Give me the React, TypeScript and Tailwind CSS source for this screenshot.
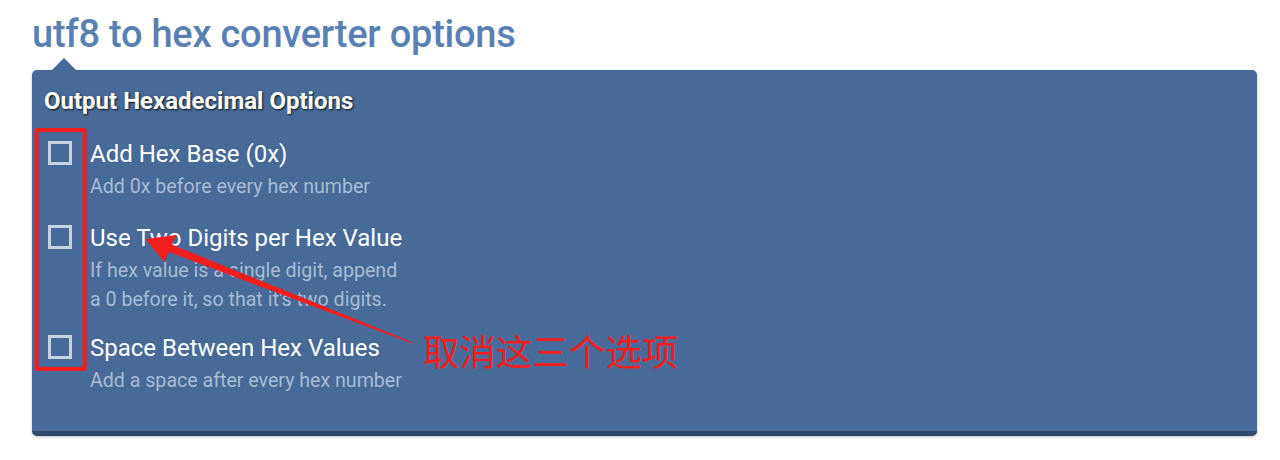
import React from "react";

const items = [
  { label: "Add Hex Base (0x)", desc: ["Add 0x before every hex number"], gap: "" },
  {
    label: "Use Two Digits per Hex Value",
    desc: ["If hex value is a single digit, append", "a 0 before it, so that it's two digits."],
    gap: "mt-[23px]",
  },
  { label: "Space Between Hex Values", desc: ["Add a space after every hex number"], gap: "mt-[20px]" },
];

export default function App() {
  return (
    <div className="w-[1280px] h-[460px] bg-white relative overflow-hidden" style={{ fontFamily: "Roboto, 'Noto Sans', sans-serif" }}>
      <div className="pl-[32px] pr-[23px]">
        <h1 className="pt-[14px] mb-[16px] text-[38px] leading-[40px] font-medium text-[#5a7fb3] tracking-[-0.25px]">
          utf8 to hex converter options
        </h1>
        <div className="relative bg-[#476a98] rounded-[5px] border-b-[5px] border-[#2f4a6c] shadow-[0_1px_3px_rgba(0,0,0,0.25)] pl-[12px] pt-[17px] pb-[36px]">
          <div className="absolute left-[20px] top-[-12px] w-0 h-0 border-l-[12px] border-r-[12px] border-b-[12px] border-l-transparent border-r-transparent border-b-[#476a98]" />
          <div className="text-[24px] leading-[28px] font-bold text-white [text-shadow:1px_1px_2px_#111]">
            Output Hexadecimal Options
          </div>
          <div className="mt-[25px] flex flex-col">
            {items.map((it) => (
              <div key={it.label} className={`flex items-start ${it.gap}`}>
                <div className="ml-[4px] mt-[1px] w-[24px] h-[24px] border-[3px] border-[#c9d2df] shrink-0" />
                <div className="ml-[18px]">
                  <div className="text-[24px] leading-[28px] text-white">{it.label}</div>
                  <div className="mt-[4px] text-[19.6px] leading-[29px] text-[#a9bad3]">
                    {it.desc.map((d) => (
                      <div key={d}>{d}</div>
                    ))}
                  </div>
                </div>
              </div>
            ))}
          </div>
        </div>
      </div>

      <div className="absolute left-[35px] top-[128px] w-[52px] h-[243px] border-[4px] border-[#f21d1d] rounded-[3px]" />

      <svg className="absolute left-0 top-0" width="1280" height="460" viewBox="0 0 1280 460">
        <polygon
          points="146,239 177,235 172,244.5 413.3,342.6 412.7,343.6 169.3,252 164.5,262"
          fill="#f21d1d"
        />
      </svg>

      <div
        className="absolute left-[423px] top-[327px] text-[36.5px] leading-[48px] text-[#f21d1d]"
        style={{ fontFamily: "'Noto Sans CJK SC', sans-serif" }}
      >
        取消这三个选项
      </div>
    </div>
  );
}
